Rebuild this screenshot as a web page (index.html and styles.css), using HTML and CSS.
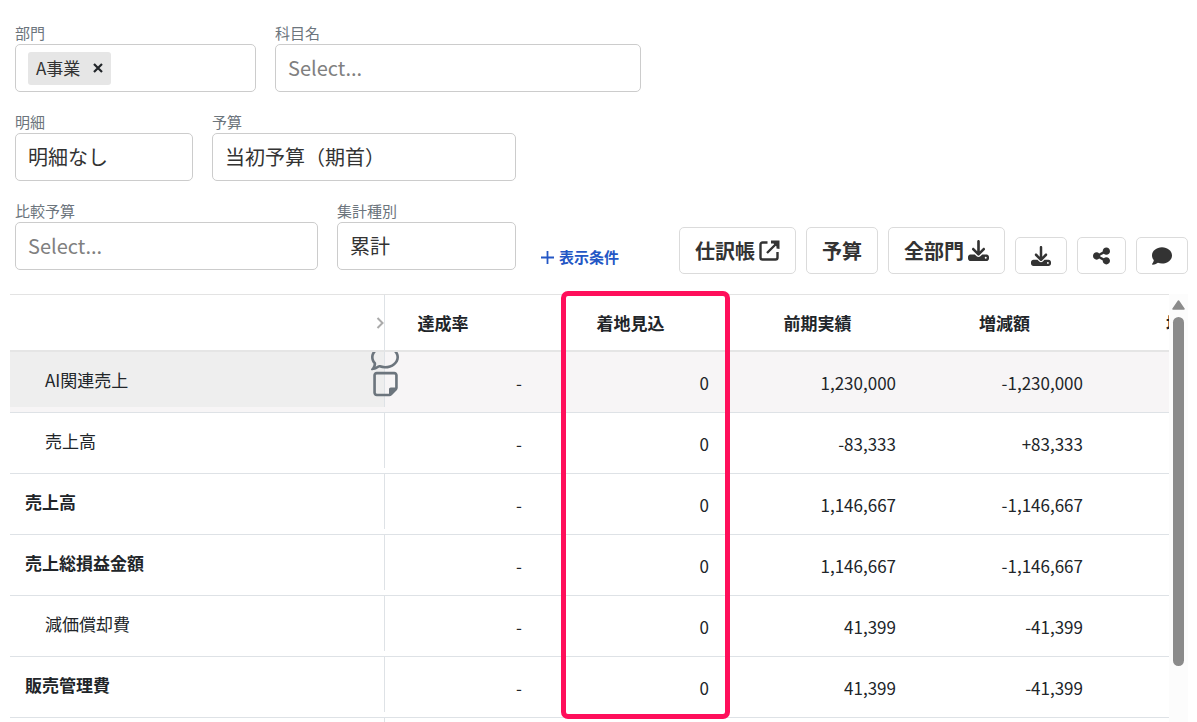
FILE: index.html
```
<!DOCTYPE html>
<html lang="ja">
<head>
	<meta charset="UTF-8">
	<meta name="viewport" content="width=device-width, initial-scale=1.0">
	<title>予算実績</title>
	<link rel="stylesheet" href="styles.css">
</head>
<body>
	<svg class="defs" aria-hidden="true">
		<symbol id="download" viewBox="0 0 512 512"><path d="M288 32c0-17.7-14.3-32-32-32s-32 14.3-32 32V274.7l-73.4-73.4c-12.5-12.5-32.8-12.5-45.3 0s-12.5 32.8 0 45.3l128 128c12.5 12.5 32.8 12.5 45.3 0l128-128c12.5-12.5 12.5-32.8 0-45.3s-32.8-12.5-45.3 0L288 274.7V32zM64 352c-35.3 0-64 28.7-64 64v32c0 35.3 28.7 64 64 64H448c35.3 0 64-28.7 64-64V416c0-35.3-28.7-64-64-64H346.5l-45.3 45.3c-25 25-65.5 25-90.5 0L165.5 352H64zm368 56a24 24 0 1 1 0 48 24 24 0 1 1 0-48z"/></symbol>
	</svg>

	<form class="filters">
		<div class="row">
			<div class="field w-dept">
				<label for="dept">部門</label>
				<div class="control multi">
					<span class="chip">A事業
						<button type="button" aria-label="A事業を外す">
							<svg width="10" height="10" viewBox="0 0 10 10"><path d="M1 1l8 8M9 1l-8 8" stroke="currentColor" stroke-width="2.2"/></svg>
						</button>
					</span>
					<input type="text" id="dept">
				</div>
			</div>
			<div class="field w-account">
				<label for="account">科目名</label>
				<select id="account" class="control empty"><option>Select...</option></select>
			</div>
		</div>
		<div class="row">
			<div class="field w-detail">
				<label for="detail">明細</label>
				<select id="detail" class="control"><option>明細なし</option></select>
			</div>
			<div class="field w-budget">
				<label for="budget">予算</label>
				<select id="budget" class="control"><option>当初予算（期首）</option></select>
			</div>
		</div>
		<div class="row last">
			<div class="field w-compare">
				<label for="compare">比較予算</label>
				<select id="compare" class="control empty"><option>Select...</option></select>
			</div>
			<div class="field w-kind">
				<label for="kind">集計種別</label>
				<select id="kind" class="control"><option>累計</option></select>
			</div>
			<a href="#" class="conditions">
				<svg width="13" height="13" viewBox="0 0 13 13"><path d="M6.5 0v13M0 6.5h13" stroke="currentColor" stroke-width="1.8"/></svg>
				表示条件
			</a>
			<div class="actions">
				<button type="button" class="btn">仕訳帳
					<svg width="21" height="21" viewBox="0 0 21 21"><path d="M8.5 2.5H3.5a2 2 0 0 0-2 2v13a2 2 0 0 0 2 2h13a2 2 0 0 0 2-2V12M8 13L18 3" fill="none" stroke="currentColor" stroke-width="2.4"/><path d="M12 .5H20.500V9L17.500 8.500V6.500L14.500 3.500H12z" fill="currentColor"/></svg>
				</button>
				<button type="button" class="btn">予算</button>
				<button type="button" class="btn">全部門
					<svg width="21" height="21"><use href="#download"/></svg>
				</button>
				<button type="button" class="btn icon" aria-label="ダウンロード">
					<svg width="20" height="20"><use href="#download"/></svg>
				</button>
				<button type="button" class="btn icon" aria-label="共有">
					<svg width="17" height="20" viewBox="0 0 448 512"><path d="M352 224c53 0 96-43 96-96s-43-96-96-96s-96 43-96 96c0 4 .2 8 .7 11.900l-94.100 47C145.400 170.200 121.900 160 96 160c-53 0-96 43-96 96s43 96 96 96c25.900 0 49.400-10.200 66.600-26.900l94.100 47c-.5 3.900-.7 7.800-.7 11.900c0 53 43 96 96 96s96-43 96-96s-43-96-96-96c-25.900 0-49.400 10.200-66.600 26.900l-94.100-47c.5-3.900 .7-7.800 .7-11.900s-.2-8-.7-11.900l94.100-47C302.600 213.800 326.100 224 352 224z"/></svg>
				</button>
				<button type="button" class="btn icon" aria-label="コメント">
					<svg width="20" height="20" viewBox="0 0 512 512"><path d="M512 240c0 114.900-114.600 208-256 208c-37.100 0-72.300-6.400-104.100-17.900c-11.900 8.700-31.300 20.600-54.300 30.600C73.600 471.100 44.700 480 16 480c-6.500 0-12.300-3.900-14.800-9.900c-2.500-6-1.100-12.800 3.400-17.400c5-5 13-14 21.700-28.700c10-16.600 19.500-38.400 21.400-62.900C17.700 326.800 0 285.100 0 240C0 125.100 114.600 32 256 32s256 93.100 256 208z"/></svg>
				</button>
			</div>
		</div>
	</form>

	<main class="sheet">
		<div class="pane">
			<table>
				<colgroup>
					<col class="c-name"><col class="c-first"><col><col><col><col>
				</colgroup>
				<thead>
					<tr>
						<th class="corner">
							<svg width="8" height="12" viewBox="0 0 8 12"><path d="M1.500 1l5 5-5 5" fill="none" stroke="currentColor" stroke-width="2"/></svg>
						</th>
						<th class="cut">達成率</th>
						<th>着地見込</th>
						<th>前期実績</th>
						<th>増減額</th>
						<th>増減率</th>
					</tr>
				</thead>
				<tbody>
					<tr class="hover">
						<td class="name">
							<div class="child">AI関連売上
								<div class="tools">
									<button type="button" aria-label="コメント">
										<svg width="28" height="28" viewBox="0 0 512 512"><path d="M123.600 391.300c12.900-9.400 29.600-11.800 44.600-6.400c26.500 9.600 56.200 15.100 87.800 15.100c124.700 0 208-80.500 208-160s-83.300-160-208-160S48 160.500 48 240c0 32 12.400 62.800 35.700 89.200c8.600 9.700 12.800 22.500 11.800 35.500c-1.400 18.100-5.700 34.700-11.300 49.400c17-7.900 31.100-16.700 39.400-22.700zM21.200 431.900c1.800-2.700 3.500-5.400 5.100-8.100c10-16.600 19.500-38.400 21.400-62.900C17.700 326.800 0 285.100 0 240C0 125.100 114.600 32 256 32s256 93.100 256 208s-114.600 208-256 208c-37.100 0-72.300-6.400-104.100-17.900c-11.900 8.700-31.300 20.600-54.300 30.600c-15.100 6.600-32.300 12.600-50.100 16.100c-.8 .2-1.600 .3-2.400 .5c-4.400 .8-8.700 1.500-13.200 1.900c-.2 0-.5 .1-.7 .1c-5.100 .5-10.200 .8-15.300 .8c-6.500 0-12.300-3.900-14.800-9.900c-2.500-6-1.100-12.800 3.400-17.400c4.100-4.200 7.800-8.700 11.300-13.500c1.700-2.300 3.300-4.600 4.800-6.900z"/></svg>
									</button>
									<button type="button" aria-label="メモ">
										<svg width="25" height="28" viewBox="0 0 448 512"><path d="M64 80c-8.800 0-16 7.200-16 16V416c0 8.800 7.200 16 16 16H288V352c0-17.700 14.300-32 32-32h80V96c0-8.800-7.200-16-16-16H64zM288 480H64c-35.300 0-64-28.700-64-64V96C0 60.700 28.700 32 64 32H384c35.300 0 64 28.700 64 64V320v5.500c0 17-6.700 33.300-18.700 45.300l-90.500 90.500c-12 12-28.300 18.700-45.300 18.700H288z"/></svg>
									</button>
								</div>
							</div>
						</td>
						<td>-</td><td>0</td><td>1,230,000</td><td>-1,230,000</td><td></td>
					</tr>
					<tr>
						<td class="name"><div class="child">売上高</div></td>
						<td>-</td><td>0</td><td>-83,333</td><td>+83,333</td><td></td>
					</tr>
					<tr>
						<td class="name"><div>売上高</div></td>
						<td>-</td><td>0</td><td>1,146,667</td><td>-1,146,667</td><td></td>
					</tr>
					<tr>
						<td class="name"><div>売上総損益金額</div></td>
						<td>-</td><td>0</td><td>1,146,667</td><td>-1,146,667</td><td></td>
					</tr>
					<tr>
						<td class="name"><div class="child">減価償却費</div></td>
						<td>-</td><td>0</td><td>41,399</td><td>-41,399</td><td></td>
					</tr>
					<tr>
						<td class="name"><div>販売管理費</div></td>
						<td>-</td><td>0</td><td>41,399</td><td>-41,399</td><td></td>
					</tr>
					<tr>
						<td class="name"><div></div></td>
						<td></td><td></td><td></td><td></td><td></td>
					</tr>
				</tbody>
			</table>
		</div>
		<div class="scrollbar">
			<svg width="13" height="10" viewBox="0 0 13 10"><path d="M6.500 1L12 9H1z" fill="#8b8b8b" stroke="#8b8b8b" stroke-width="1.500" stroke-linejoin="round"/></svg>
			<div class="thumb"></div>
		</div>
		<div class="highlight"></div>
	</main>
</body>
</html>
```
FILE: styles.css
```
* {
	box-sizing: border-box;
}
body {
	display: flex;
	flex-direction: column;
	height: 100vh;
	margin: 0;
	overflow: hidden;
	background-color: #fff;
	color: #212529;
	font-family: "Noto Sans CJK JP", sans-serif;
	font-size: 17px;
}
button, input, select {
	margin: 0;
	padding: 0;
	border: 0;
	background: none;
	color: inherit;
	font: inherit;
}
svg {
	display: block;
	flex: none;
	fill: currentColor;
}
.defs {
	position: absolute;
	width: 0;
	height: 0;
}

/* filters */
.filters {
	display: flex;
	flex-direction: column;
	gap: 19px;
	padding: 22px 9px 20px 15px;
}
.row {
	display: flex;
	gap: 19px;
}
.field label {
	display: block;
	color: #6c757d;
	font-size: 15px;
	line-height: 22px;
}
.w-dept {
	width: 241px;
}
.w-account {
	width: 366px;
}
.w-detail {
	width: 178px;
}
.w-budget {
	width: 304px;
}
.w-compare {
	width: 303px;
}
.w-kind {
	width: 179px;
}
.control {
	display: block;
	width: 100%;
	height: 48px;
	padding: 0 12px 2px;
	border: 1px solid #ccc;
	border-radius: 5px;
	background-color: #fff;
	color: #333;
	font-size: 20px;
	appearance: none;
}
.empty {
	color: #808080;
}
.multi {
	display: flex;
	align-items: center;
	padding-bottom: 0;
}
.multi input {
	flex: 1;
	min-width: 0;
	outline: 0;
}
.chip {
	display: flex;
	align-items: center;
	gap: 13px;
	height: 33px;
	padding: 0 8px 1px;
	border-radius: 3px;
	background-color: #e6e6e6;
	font-size: 17px;
}
.chip button {
	color: #212529;
}
.last {
	align-items: flex-end;
}
.last .field {
	margin-bottom: 4px;
}
.conditions {
	display: flex;
	align-items: center;
	gap: 5px;
	margin: 0 0 6px 6px;
	color: #2457c5;
	font-size: 15px;
	font-weight: bold;
	line-height: 22px;
	text-decoration: none;
}
.actions {
	display: flex;
	align-items: flex-end;
	gap: 10px;
	margin-left: auto;
}
.btn {
	display: flex;
	align-items: center;
	gap: 4px;
	height: 47px;
	padding: 0 15px;
	border: 1px solid #dbdbdb;
	border-radius: 5px;
	background-color: #fff;
	color: #333;
	font-size: 20px;
	font-weight: bold;
}
.icon {
	height: 37px;
}

/* table */
.sheet {
	position: relative;
	display: flex;
	flex: 1;
	min-height: 0;
	padding: 0 9px 0 10px;
}
.pane {
	flex: 1;
	overflow: hidden;
}
table {
	width: 1275px;
	table-layout: fixed;
	border-collapse: separate;
	border-spacing: 0;
}
col {
	width: 187px;
}
.c-name {
	width: 375px;
}
.c-first {
	width: 152px;
}
th {
	height: 58px;
	padding: 0;
	border-top: 1px solid #e3e3e3;
	border-bottom: 2px solid #e5e5e5;
}
.cut {
	padding-right: 36px;
}
.corner {
	border-right: 1px solid #dee2e6;
	color: #aaa;
}
.corner svg {
	margin-left: auto;
}
td {
	height: 61px;
	padding: 0 15px 0 0;
	border-bottom: 1px solid #dee2e6;
	text-align: right;
}
.name {
	padding: 0;
	text-align: left;
	vertical-align: top;
}
.name > div {
	position: relative;
	display: flex;
	align-items: center;
	height: 55px;
	padding-left: 15px;
	border-right: 1px solid #dee2e6;
	font-weight: bold;
}
.name .child {
	padding-left: 35px;
	font-weight: normal;
}
.hover {
	background-color: #f7f5f6;
}
.hover .name > div {
	background-color: #eee;
}
.tools {
	position: absolute;
	top: 0;
	right: -15px;
	display: flex;
	flex-direction: column;
	align-items: center;
	justify-content: flex-end;
	height: 46px;
	overflow: hidden;
	color: #6c757d;
}
.tools button + button {
	margin-top: -2px;
}

.scrollbar {
	display: flex;
	flex-direction: column;
	align-items: center;
	gap: 7px;
	width: 19px;
	padding: 6px 0 56px;
	background-color: #fcfcfc;
}
.thumb {
	flex: 1;
	width: 11px;
	border-radius: 6px;
	background-color: #8b8b8b;
}

/* frame over the 着地見込 column */
.highlight {
	position: absolute;
	top: -3px;
	bottom: 3px;
	left: 561px;
	width: 169px;
	border: 5px solid #ff0f5b;
	border-radius: 7px;
	pointer-events: none;
}
```
